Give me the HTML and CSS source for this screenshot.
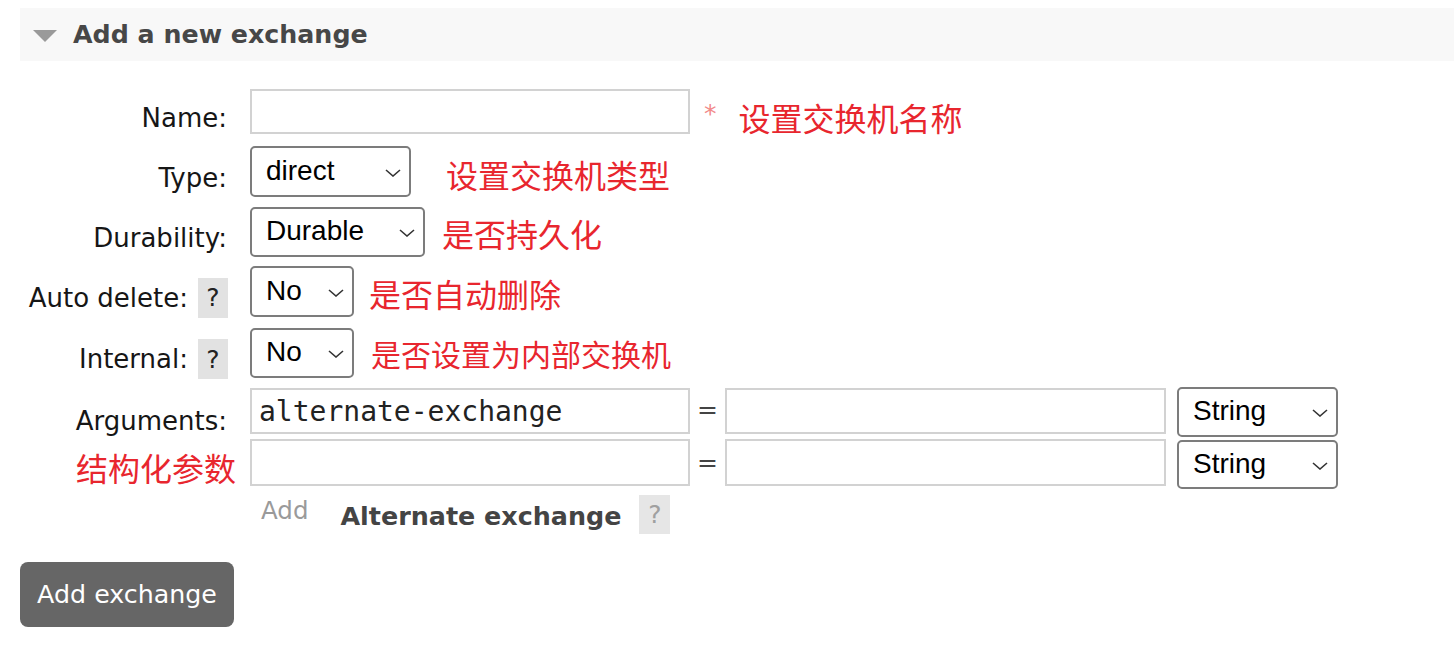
FILE: index.html
```html
<!DOCTYPE html>
<html lang="zh">
<head>
<meta charset="utf-8">
<title>Add a new exchange</title>
<link rel="stylesheet" href="styles.css">
</head>
<body>
<div class="panel">
  <div class="panel-head">
    <svg class="toggle" width="24" height="12" viewBox="0 0 24 12"><polygon points="0,0 24,0 12,12" fill="#9a9a9a"/></svg>
    <h2 class="title">Add a new exchange</h2>
  </div>

  <form class="form">
    <div class="row row-name">
      <div class="label">Name:</div>
      <div class="ctrl">
        <input class="text" type="text">
        <span class="mand">*</span>
        <span class="note note-name">设置交换机名称</span>
      </div>
    </div>

    <div class="row row-type">
      <div class="label">Type:</div>
      <div class="ctrl">
        <span class="sel sel-type"><span class="sel-val">direct</span><svg class="chev" width="16" height="8" viewBox="0 0 16 8"><polyline points="1,1 8,7 15,1" fill="none" stroke="#333" stroke-width="1.6"/></svg></span>
        <span class="note note-type">设置交换机类型</span>
      </div>
    </div>

    <div class="row row-dur">
      <div class="label">Durability:</div>
      <div class="ctrl">
        <span class="sel sel-dur"><span class="sel-val">Durable</span><svg class="chev" width="16" height="8" viewBox="0 0 16 8"><polyline points="1,1 8,7 15,1" fill="none" stroke="#333" stroke-width="1.6"/></svg></span>
        <span class="note note-dur">是否持久化</span>
      </div>
    </div>

    <div class="row row-auto">
      <div class="label">Auto delete:<span class="help">?</span></div>
      <div class="ctrl">
        <span class="sel sel-no"><span class="sel-val">No</span><svg class="chev" width="16" height="8" viewBox="0 0 16 8"><polyline points="1,1 8,7 15,1" fill="none" stroke="#333" stroke-width="1.6"/></svg></span>
        <span class="note note-auto">是否自动删除</span>
      </div>
    </div>

    <div class="row row-int">
      <div class="label">Internal:<span class="help">?</span></div>
      <div class="ctrl">
        <span class="sel sel-no"><span class="sel-val">No</span><svg class="chev" width="16" height="8" viewBox="0 0 16 8"><polyline points="1,1 8,7 15,1" fill="none" stroke="#333" stroke-width="1.6"/></svg></span>
        <span class="note note-int">是否设置为内部交换机</span>
      </div>
    </div>

    <div class="row row-args">
      <div class="label label-args">Arguments:</div>
      <div class="ctrl ctrl-args">
        <input class="text mono" type="text" value="alternate-exchange">
        <span class="eq">=</span>
        <input class="text text-val" type="text">
        <span class="sel sel-str"><span class="sel-val">String</span><svg class="chev" width="16" height="8" viewBox="0 0 16 8"><polyline points="1,1 8,7 15,1" fill="none" stroke="#333" stroke-width="1.6"/></svg></span>
      </div>
    </div>

    <div class="row row-args2">
      <div class="label label-note"><span class="note">结构化参数</span></div>
      <div class="ctrl ctrl-args">
        <input class="text mono" type="text">
        <span class="eq">=</span>
        <input class="text text-val" type="text">
        <span class="sel sel-str"><span class="sel-val">String</span><svg class="chev" width="16" height="8" viewBox="0 0 16 8"><polyline points="1,1 8,7 15,1" fill="none" stroke="#333" stroke-width="1.6"/></svg></span>
      </div>
    </div>

    <div class="row row-add">
      <div class="label"></div>
      <div class="ctrl ctrl-add">
        <span class="add-link">Add</span>
        <span class="alt">Alternate exchange</span>
        <span class="help help-light">?</span>
      </div>
    </div>

    <button class="submit" type="button">Add exchange</button>
  </form>
</div>
</body>
</html>
```

FILE: styles.css
```css
html, body {
  margin: 0;
  padding: 0;
  background: #fff;
}

body {
  font-family: "DejaVu Sans", Verdana, sans-serif;
  font-size: 26px;
  color: #1a1a1a;
}

.panel-head {
  margin: 8px 0 0 20px;
  height: 53px;
  background: #f8f8f8;
  display: flex;
  align-items: center;
}

.toggle {
  margin-left: 13px;
  margin-top: 2px;
}

.title {
  margin: 0 0 0 16px;
  font-size: 25.3px;
  font-weight: bold;
  color: #474747;
}

.form {
  margin-top: 28px;
}

.row {
  display: flex;
  align-items: stretch;
}

.label {
  width: 250px;
  box-sizing: border-box;
  padding-right: 23px;
  padding-top: 12px;
  display: flex;
  align-items: center;
  justify-content: flex-end;
  white-space: nowrap;
  color: #161616;
}

.ctrl {
  display: flex;
  align-items: center;
}

.row-name { height: 45px; margin-bottom: 12px; }
.row-type { height: 51px; margin-bottom: 10px; }
.row-dur { height: 50px; margin-bottom: 9px; }
.row-auto { height: 51px; margin-bottom: 11px; }
.row-int { height: 50px; margin-bottom: 9px; }
.row-args { height: 50px; margin-bottom: 3px; }
.row-args2 { height: 49px; margin-bottom: 6px; }
.row-add { height: 39px; }

.row-auto .label,
.row-int .label {
  padding-right: 22px;
}

.label-args {
  padding-top: 18px;
}

.label-note {
  padding-right: 14px;
  padding-top: 4px;
}

.help {
  display: inline-flex;
  align-items: center;
  justify-content: center;
  width: 30px;
  height: 40px;
  background: #e2e2e2;
  color: #222;
  font-size: 25px;
  margin-left: 10px;
}

.text {
  box-sizing: border-box;
  width: 440px;
  height: 46px;
  border: 2px solid #d2d2d2;
  border-radius: 0;
  padding: 0 7px;
  margin: 0;
  background: #fff;
  font-family: "DejaVu Sans Mono", monospace;
  font-size: 28px;
  color: #222;
  outline: none;
}

.text-val {
  width: 441px;
}

.row-name .text {
  height: 45px;
}

.ctrl-args {
  align-items: flex-start;
}

.ctrl-args .text {
  margin-top: 1px;
}

.row-args2 .ctrl-args .text {
  margin-top: -1px;
  height: 47px;
}

.eq {
  width: 35px;
  text-align: center;
  font-size: 25px;
  color: #444;
  line-height: 46px;
}

.sel {
  position: relative;
  box-sizing: border-box;
  height: 50px;
  border: 2px solid #7c7c7c;
  border-radius: 5px;
  background: #fff;
  display: inline-flex;
  align-items: center;
  padding-left: 14px;
  font-family: "Liberation Sans", Arial, sans-serif;
  font-size: 28px;
  color: #000;
}

.sel-val {
  margin-top: -2px;
}

.chev {
  position: absolute;
  right: 8px;
  top: 50%;
  margin-top: -3px;
}

.sel-type { width: 161px; height: 51px; }
.sel-dur { width: 175px; }
.sel-no { width: 104px; height: 51px; }
.row-int .sel-no { height: 50px; }
.sel-str { width: 161px; margin-left: 11px; }
.row-args2 .sel-str { height: 49px; }

.note {
  font-family: "Noto Sans CJK SC", sans-serif;
  font-size: 32px;
  color: #e8262e;
  padding-top: 8px;
}

.mand {
  font-size: 25px;
  color: #f28a8a;
  margin-left: 14px;
  align-self: flex-start;
  margin-top: 12px;
  line-height: 1;
}

.note-name { margin-left: 22px; padding-top: 10px; }
.note-type { margin-left: 35px; padding-top: 4px; }
.note-dur { margin-left: 17px; padding-top: 2px; }
.note-auto { margin-left: 15px; padding-top: 2px; }
.note-int { margin-left: 17px; padding-top: 0; font-size: 30px; }

.label-note .note {
  padding-top: 0;
}

.ctrl-add {
  align-items: center;
}

.add-link {
  margin-left: 11px;
  font-size: 24.5px;
  color: #9a9a9a;
  margin-top: -8px;
}

.alt {
  margin-left: 32px;
  font-weight: bold;
  font-size: 25.4px;
  color: #444;
  margin-top: 2px;
}

.help-light {
  margin-left: 18px;
  width: 31px;
  height: 39px;
  background: #e6e6e6;
  color: #a0a0a0;
}

.submit {
  display: block;
  margin: 28px 0 0 20px;
  width: 214px;
  height: 65px;
  border: none;
  border-radius: 8px;
  background: #666;
  color: #fff;
  font-family: "DejaVu Sans", Verdana, sans-serif;
  font-size: 25.3px;
  padding: 0;
}
```
